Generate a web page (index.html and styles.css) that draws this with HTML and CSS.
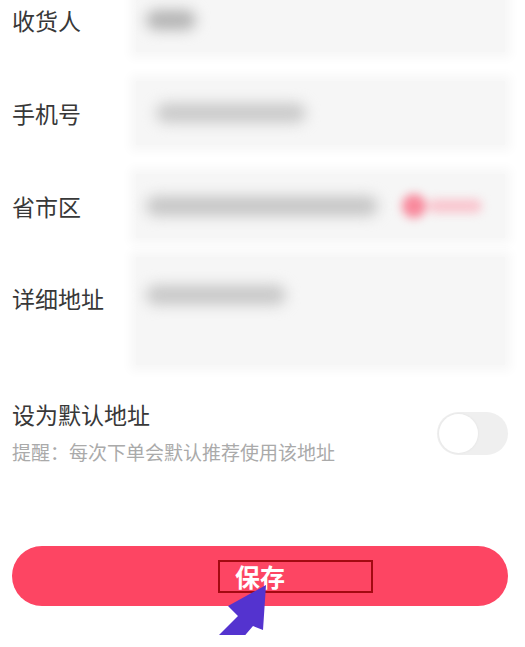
FILE: index.html
```html
<!DOCTYPE html>
<html lang="zh-CN">
<head>
    <meta charset="UTF-8">
    <meta name="viewport" content="width=device-width, initial-scale=1.0">
    <title>编辑收货地址</title>
    <link rel="stylesheet" href="styles.css">
</head>
<body>
    <main class="page">
        <div class="form">
            <div class="row">
                <div class="label">收货人</div>
                <div class="field">
                    <span class="blob name"></span>
                </div>
            </div>
            <div class="row">
                <div class="label">手机号</div>
                <div class="field">
                    <span class="blob phone"></span>
                </div>
            </div>
            <div class="row">
                <div class="label">省市区</div>
                <div class="field">
                    <span class="blob region"></span>
                    <span class="locate"><span class="dot"></span><span class="tail"></span></span>
                </div>
            </div>
            <div class="row tall">
                <div class="label">详细地址</div>
                <div class="field">
                    <span class="blob detail"></span>
                </div>
            </div>
        </div>

        <div class="default">
            <div class="default-text">
                <div class="default-title">设为默认地址</div>
                <div class="default-hint">提醒：每次下单会默认推荐使用该地址</div>
            </div>
            <div class="switch"><span class="knob"></span></div>
        </div>

        <button class="save"><span class="mark">保存</span></button>

        <svg class="arrow" width="80" height="60" viewBox="0 0 80 60">
            <polygon points="76,5 38,26 48,36 24,60 51,60 63,46 73,50" fill="#5433cf"/>
        </svg>
    </main>
</body>
</html>
```

FILE: styles.css
```css
body {
    margin: 0;
    padding: 0;
    background-color: #ffffff;
    font-family: "Noto Sans CJK SC", "Noto Sans", sans-serif;
    overflow: hidden;
}
.page {
    position: relative;
    width: 525px;
    height: 647px;
}
.form {
    margin-top: -12px;
    display: flex;
    flex-direction: column;
    gap: 29px;
}
.row {
    display: flex;
    align-items: center;
    height: 64px;
}
.row.tall {
    align-items: flex-start;
    height: 108px;
    margin-top: -10px;
}
.label {
    width: 118px;
    padding-left: 12px;
    font-size: 23px;
    color: #383838;
    flex-shrink: 0;
}
.row.tall .label {
    padding-top: 24px;
}
.field {
    position: relative;
    flex: 1;
    align-self: stretch;
    margin: 0 20px 0 6px;
    background-color: #f6f6f6;
    box-shadow: 0 0 10px 6px #f7f7f7;
    display: flex;
    align-items: center;
    padding-left: 10px;
}
.row.tall .field {
    align-items: flex-start;
    padding-top: 28px;
}
.blob {
    display: block;
    height: 20px;
    background-color: #c4c4c4;
    border-radius: 10px;
    filter: blur(7px);
}
.blob.name {
    width: 50px;
    background-color: #b4b4b4;
}
.blob.phone {
    width: 150px;
    margin-left: 10px;
    background-color: #cacaca;
}
.blob.region {
    width: 232px;
    background-color: #c6c6c6;
}
.blob.detail {
    width: 140px;
    background-color: #c8c8c8;
}
.locate {
    display: flex;
    align-items: center;
    margin-left: 24px;
    filter: blur(5px);
}
.dot {
    width: 24px;
    height: 24px;
    border-radius: 50%;
    background-color: #f8899c;
}
.tail {
    width: 54px;
    height: 14px;
    margin-left: 2px;
    border-radius: 7px;
    background-color: #f9c6cf;
}
.default {
    display: flex;
    align-items: center;
    justify-content: space-between;
    margin-top: 33px;
    padding: 0 17px 0 12px;
}
.default-title {
    font-size: 23px;
    color: #383838;
    line-height: 32px;
}
.default-hint {
    margin-top: 9px;
    font-size: 19px;
    color: #aaaaaa;
    line-height: 26px;
}
.switch {
    position: relative;
    width: 71px;
    height: 43px;
    border-radius: 22px;
    background-color: #efefef;
    margin-top: 4px;
}
.knob {
    position: absolute;
    left: 2px;
    top: 2px;
    width: 39px;
    height: 39px;
    border-radius: 50%;
    background-color: #ffffff;
    box-shadow: 0 0 3px rgba(0, 0, 0, 0.06);
}
.save {
    display: flex;
    align-items: center;
    width: 496px;
    height: 60px;
    margin: 81px 0 0 12px;
    padding: 0 0 0 206px;
    border: none;
    border-radius: 30px;
    background-color: #fd4563;
    font-family: "Noto Sans CJK SC", "Noto Sans", sans-serif;
}
.mark {
    box-sizing: border-box;
    width: 155px;
    height: 33px;
    padding-left: 15px;
    border: 2px solid #a30a12;
    color: #ffffff;
    font-size: 25px;
    font-weight: bold;
    line-height: 28px;
    text-align: left;
}
.arrow {
    position: absolute;
    left: 190px;
    top: 592px;
}
```
